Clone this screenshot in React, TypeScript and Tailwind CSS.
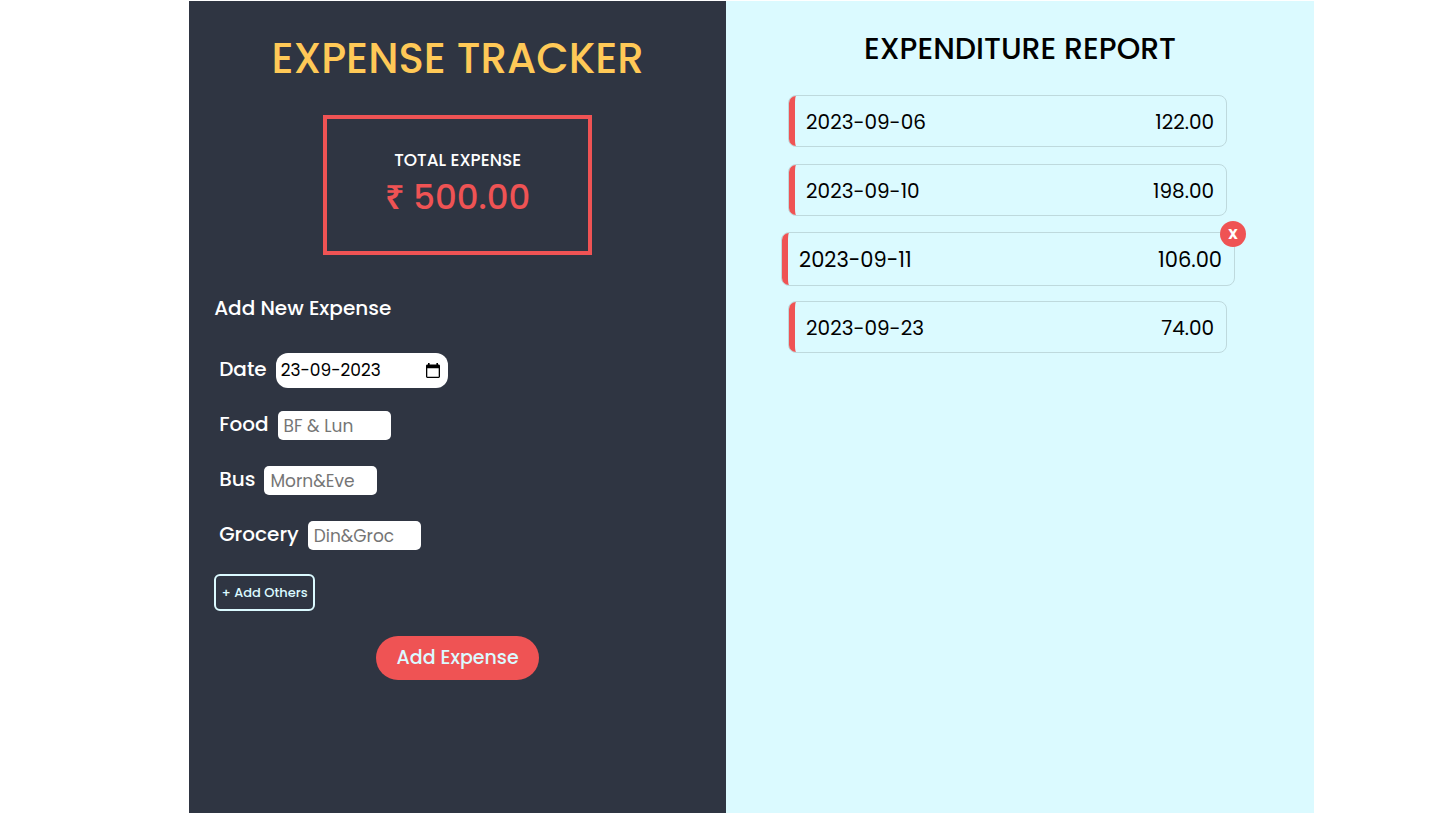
import { useState } from "react";
import clsx from "clsx";

type Field = { id: string; label: string; placeholder: string };
type Entry = { date: string; amount: string };

const fields: Field[] = [
  { id: "food", label: "Food", placeholder: "BF & Lun" },
  { id: "bus", label: "Bus", placeholder: "Morn&Eve" },
  { id: "grocery", label: "Grocery", placeholder: "Din&Groc" },
];

const entries: Entry[] = [
  { date: "2023-09-06", amount: "122.00" },
  { date: "2023-09-10", amount: "198.00" },
  { date: "2023-09-11", amount: "106.00" },
  { date: "2023-09-23", amount: "74.00" },
];

function CalendarIcon() {
  return (
    <svg viewBox="0 0 14 16" className="h-4 w-3.5" aria-hidden="true">
      <path
        fill="#000"
        fillRule="evenodd"
        d="M2 0h1.600v1.500h6.800V0H12v1.500h.6c.8 0 1.400.6 1.400 1.400v10.700c0 .8-.6 1.400-1.400 1.400H1.400C.6 15 0 14.400 0 13.600V2.900C0 2.100.6 1.500 1.400 1.500H2V0Zm-.7 5.200v8.500h11.400V5.200H1.300Z"
      />
    </svg>
  );
}

function ExpenseForm() {
  const [date, setDate] = useState("23-09-2023");
  return (
    <form className="flex flex-col" onSubmit={(e) => e.preventDefault()}>
      <h2 className="text-xl font-medium leading-[30px]">Add New Expense</h2>
      <div className="mt-5 flex flex-col pl-[5px]">
        <div className="flex h-[55px] items-center gap-[9px]">
          <label htmlFor="date" className="pb-[3px] text-xl font-medium">
            Date
          </label>
          <div className="flex h-[35px] w-[172px] items-center rounded-xl bg-white pr-2 pl-[5px] text-black">
            <input
              id="date"
              value={date}
              onChange={(e) => setDate(e.target.value)}
              className="min-w-0 flex-1 text-[17px] outline-none"
            />
            <button type="button" aria-label="Open calendar">
              <CalendarIcon />
            </button>
          </div>
        </div>
        {fields.map((f) => (
          <div key={f.id} className="flex h-[55px] items-center gap-[9px]">
            <label htmlFor={f.id} className="pb-[3px] text-xl font-medium">
              {f.label}
            </label>
            <input
              id={f.id}
              placeholder={f.placeholder}
              className="h-[29px] w-[113px] rounded-[5px] bg-white px-1.5 text-[17px] text-black outline-none placeholder:text-[#757575]"
            />
          </div>
        ))}
      </div>
      <button
        type="button"
        className="mt-[11px] h-[37px] w-[101px] rounded-[6px] border-2 border-[#dbfaff] text-[13px] font-medium whitespace-nowrap text-[#dbfaff]"
      >
        + Add Others
      </button>
      <button
        type="submit"
        className="mt-[25px] h-11 w-[163px] self-center rounded-full bg-[#ef5354] text-[19px] font-medium text-[#dbfaff]"
      >
        Add Expense
      </button>
    </form>
  );
}

function EntryRow({ entry, active }: { entry: Entry; active: boolean }) {
  return (
    <li
      className={clsx(
        "relative rounded-lg border border-[#bed9dd]",
        active ? "-mt-px -mr-2 -mb-0.5 -ml-[7px] h-[54px] text-[21px]" : "h-[52px] text-xl",
      )}
    >
      <div className="flex h-full items-center justify-between rounded-[7px] border-l-[6px] border-[#ef5354] pt-0.5 pr-3 pl-[11px]">
        <time dateTime={entry.date}>{entry.date}</time>
        <span>{entry.amount}</span>
      </div>
      {active && (
        <button
          type="button"
          aria-label="Delete expense"
          className="absolute -top-3 -right-3 flex size-[26px] items-center justify-center rounded-full bg-[#ef5354] text-sm font-bold text-white"
        >
          X
        </button>
      )}
    </li>
  );
}

export default function App() {
  return (
    <div className="flex min-h-screen bg-white pt-px pr-[9%] pl-[13.1%] font-[Poppins,Inter,sans-serif]">
      <main className="grid flex-1 grid-cols-[537fr_588fr]">
        <section className="flex flex-col bg-[#2f3542] px-[25px] pt-6 text-white">
          <h1 className="text-center text-[42px] leading-[68px] font-medium text-[#ffc957]">
            EXPENSE TRACKER
          </h1>
          <div className="mt-[22px] mb-[38px] flex h-[140px] w-[269px] flex-col items-center self-center border-4 border-[#ef5354] pt-[29px]">
            <h2 className="text-[17px] leading-6 font-medium">TOTAL EXPENSE</h2>
            <p className="text-[34px] leading-[50px] font-medium text-[#ef5354]">
              <span className="font-['Noto_Sans',sans-serif] leading-none font-semibold">₹</span> 500.00
            </p>
          </div>
          <ExpenseForm />
        </section>
        <section className="bg-[#dbfaff] pt-6 text-black">
          <h2 className="text-center text-3xl leading-[48px] font-medium">EXPENDITURE REPORT</h2>
          <ul className="mt-[22px] mr-[87px] ml-[62px] flex flex-col gap-[17px]">
            {entries.map((entry) => (
              <EntryRow key={entry.date} entry={entry} active={entry.date === "2023-09-11"} />
            ))}
          </ul>
        </section>
      </main>
    </div>
  );
}
